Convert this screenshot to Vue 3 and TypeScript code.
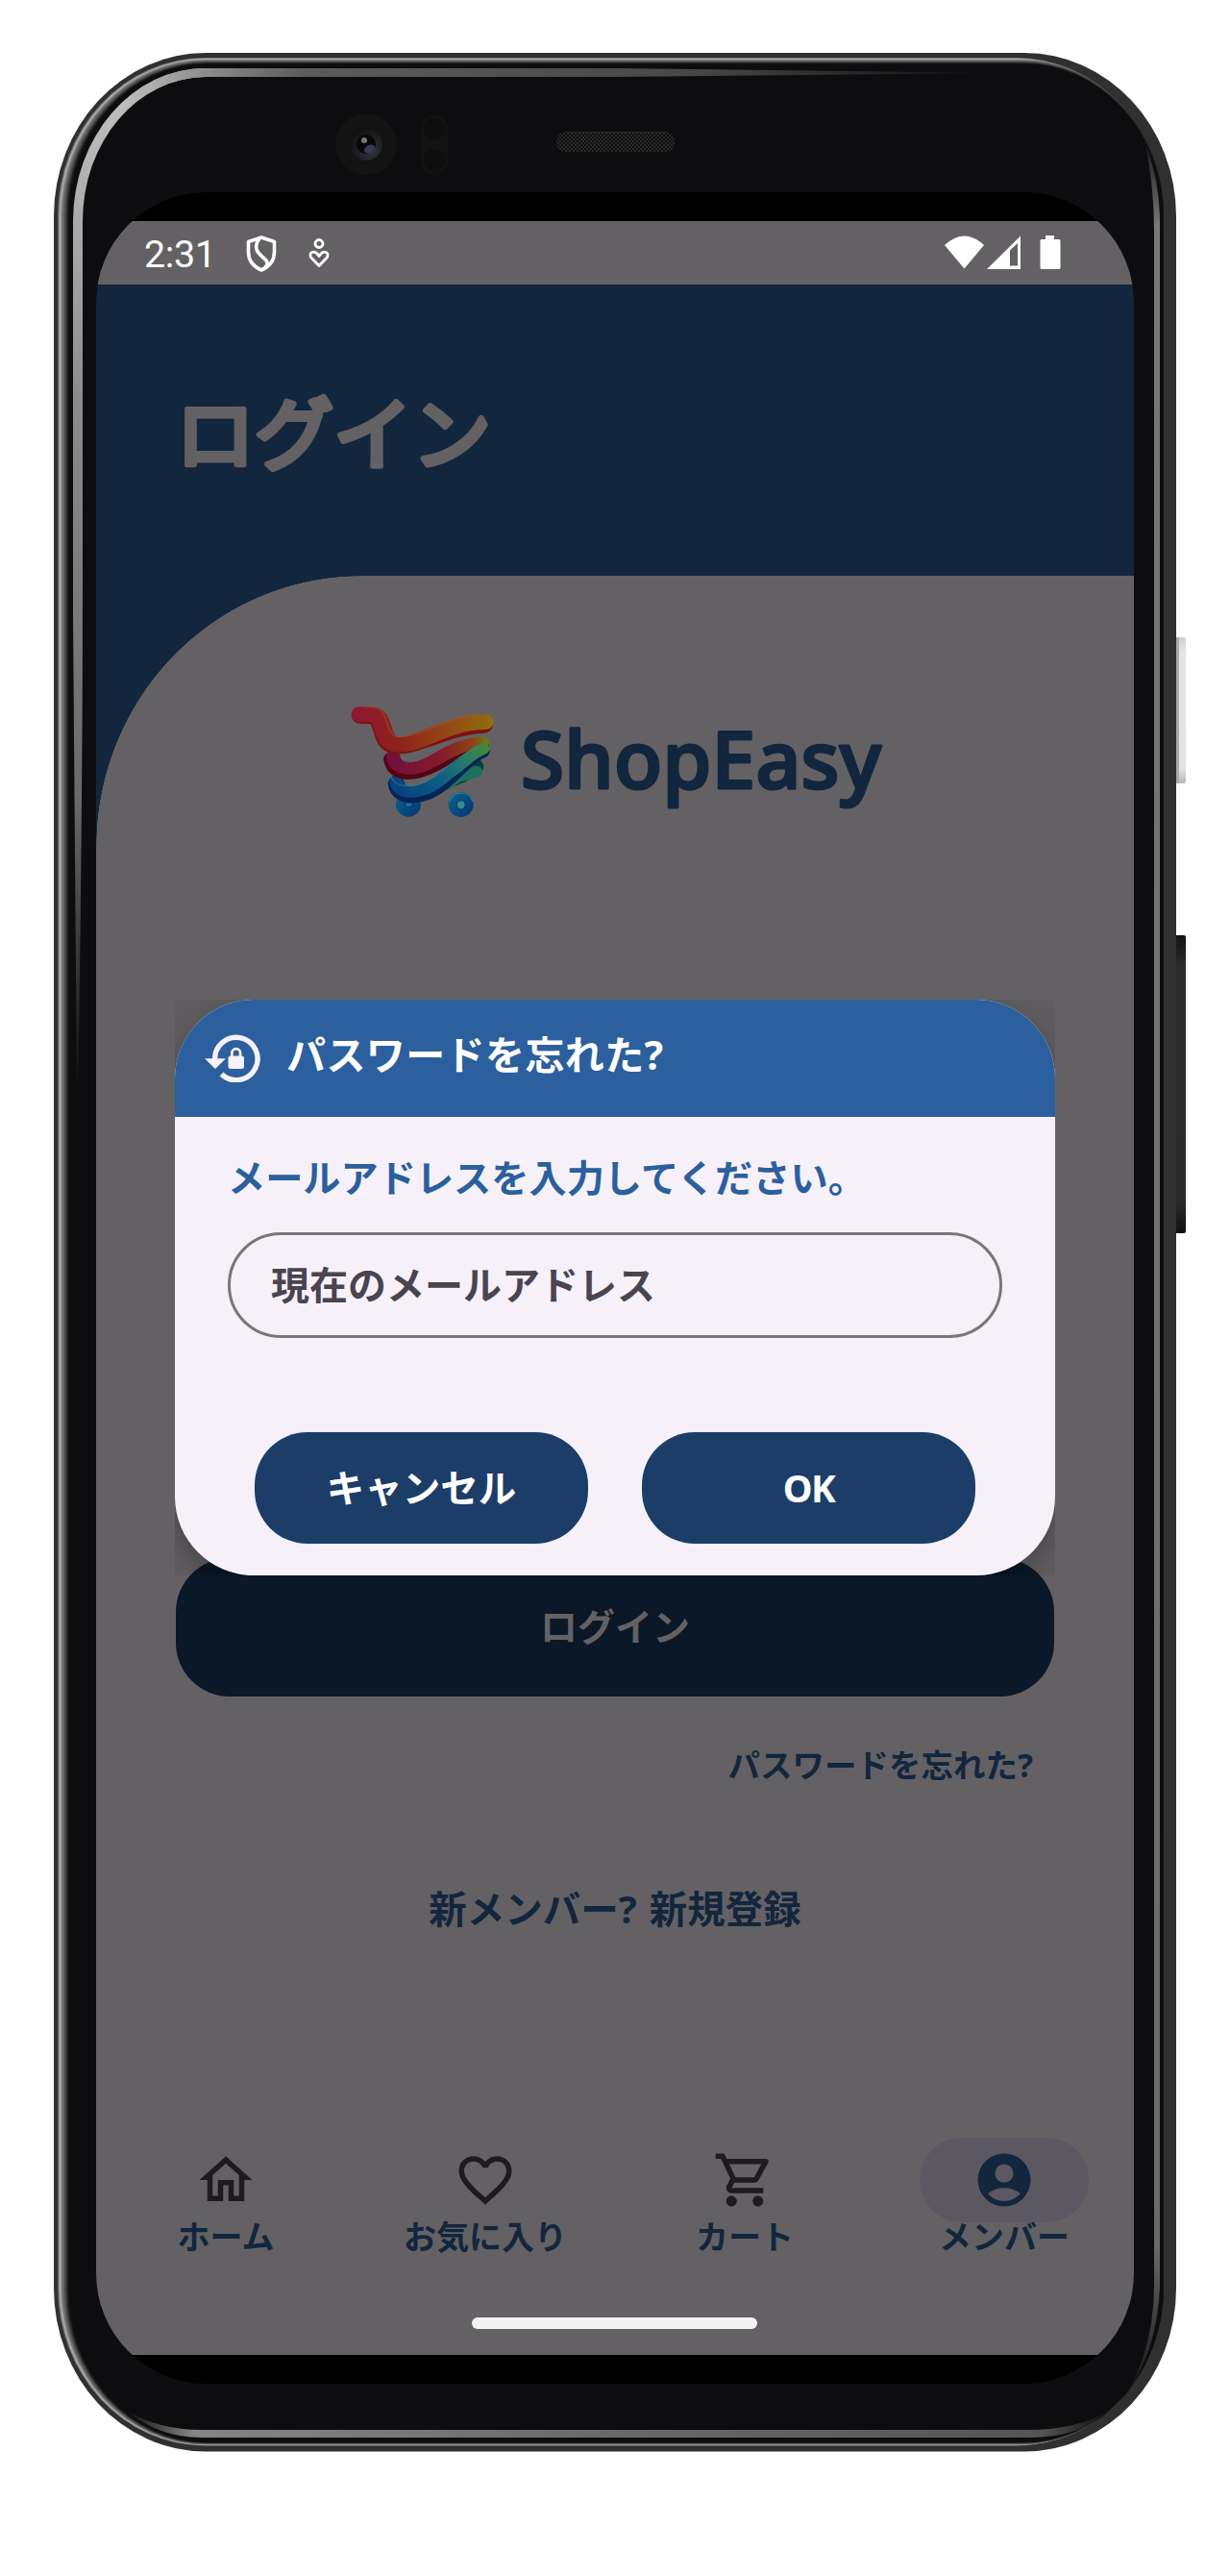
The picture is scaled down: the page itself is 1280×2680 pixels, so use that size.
<script setup lang="ts">
interface NavItem {
  id: 'home' | 'favorites' | 'cart' | 'member'
  label: string
}

const navItems: NavItem[] = [
  { id: 'home', label: 'ホーム' },
  { id: 'favorites', label: 'お気に入り' },
  { id: 'cart', label: 'カート' },
  { id: 'member', label: 'メンバー' },
]

// Concentric layers that shade the metal rim from its bright edge inwards.
const rimTones = [100, 140, 178, 150, 122, 108, 94, 80, 64, 46, 30, 18]
const rimLayers = rimTones.map((tone, i) => {
  const x = 60 + i
  const y = 60 + i * 0.55
  return {
    id: `rim${i}`,
    x,
    y,
    width: 1211 - i * 0.15 - x,
    height: 2544.5 - i * 0.3 - y,
    rx: 153 - i * 0.8,
    ry: 164 - i * 0.6,
    color: `rgb(${tone},${tone},${tone})`,
  }
})
</script>

<template>
  <div class="page">
    <svg class="device" width="1280" height="2680" viewBox="0 0 1280 2680" aria-hidden="true">
      <defs>
        <linearGradient v-for="l in rimLayers" :id="l.id" :key="l.id" gradientUnits="userSpaceOnUse" x1="56" y1="0" x2="1211" y2="0">
          <stop offset="0" :stop-color="l.color" />
          <stop offset="0.87" :stop-color="l.color" />
          <stop offset="1" stop-color="#111113" />
        </linearGradient>
        <linearGradient id="power" x1="0" y1="0" x2="0" y2="1">
          <stop offset="0" stop-color="#d0d0d0" /><stop offset="0.1" stop-color="#e4e4e4" />
          <stop offset="0.9" stop-color="#e2e2e2" /><stop offset="1" stop-color="#b8b8b8" />
        </linearGradient>
        <linearGradient id="volume" x1="0" y1="0" x2="0" y2="1">
          <stop offset="0" stop-color="#111" /><stop offset="0.1" stop-color="#2b2b2b" />
          <stop offset="0.9" stop-color="#292929" /><stop offset="1" stop-color="#111" />
        </linearGradient>
        <linearGradient id="sideGlow" gradientUnits="userSpaceOnUse" x1="0" y1="100" x2="0" y2="1140">
          <stop offset="0" stop-color="#c0c0c0" /><stop offset="0.3" stop-color="#8c8c8c" />
          <stop offset="0.7" stop-color="#6a6a6a" /><stop offset="1" stop-color="#0d0d0f" />
        </linearGradient>
        <linearGradient id="topGlow" gradientUnits="userSpaceOnUse" x1="110" y1="0" x2="1040" y2="0">
          <stop offset="0" stop-color="#bcbcbc" stop-opacity="0" /><stop offset="0.06" stop-color="#a8a8a8" /><stop offset="0.12" stop-color="#888" />
          <stop offset="0.22" stop-color="#5c5c5c" /><stop offset="0.65" stop-color="#484848" /><stop offset="1" stop-color="#0d0d0f" />
        </linearGradient>
        <linearGradient id="bottomGlow" gradientUnits="userSpaceOnUse" x1="130" y1="0" x2="1155" y2="0">
          <stop offset="0" stop-color="#0d0d0f" /><stop offset="0.07" stop-color="#858585" />
          <stop offset="0.5" stop-color="#696969" /><stop offset="0.93" stop-color="#555" /><stop offset="1" stop-color="#0d0d0f" />
        </linearGradient>
        <linearGradient id="rightGlow" gradientUnits="userSpaceOnUse" x1="0" y1="140" x2="0" y2="2500">
          <stop offset="0" stop-color="#0d0d0f" /><stop offset="0.04" stop-color="#787878" />
          <stop offset="0.93" stop-color="#6a6a6a" /><stop offset="1" stop-color="#0d0d0f" />
        </linearGradient>
        <radialGradient id="lens" cx="0.65" cy="0.7" r="0.8">
          <stop offset="0" stop-color="#34343a" /><stop offset="1" stop-color="#0c0c0d" />
        </radialGradient>
        <pattern id="mesh" width="4" height="4" patternUnits="userSpaceOnUse">
          <rect width="4" height="4" fill="#0e0e0f" />
          <rect width="2" height="2" fill="#2a2a2b" /><rect x="2" y="2" width="2" height="2" fill="#2a2a2b" />
        </pattern>
      </defs>
      <rect x="1220" y="663" width="14" height="152" rx="2" fill="url(#power)" />
      <rect x="1224" y="663" width="3" height="152" fill="#aaa" />
      <rect x="1220" y="973" width="14" height="310" rx="2" fill="url(#volume)" />
      <rect x="56" y="55" width="1168" height="2495.5" rx="158" ry="170" fill="#303030" />
      <rect v-for="l in rimLayers" :key="l.id" :x="l.x" :y="l.y" :width="l.width" :height="l.height" :rx="l.rx" :ry="l.ry" :fill="`url(#${l.id})`" />
      <rect x="72" y="67" width="1138" height="2473" rx="143" ry="157" fill="#0d0d0f" />
      <path d="M80 1140 L76 640 V230 A138 159 0 0 1 214 71 V80 A128 150 0 0 0 86 230 V600 Q86 850 81 1140Z" fill="url(#sideGlow)" />
      <path d="M76 230 A138 159 0 0 1 214 71 H640 L1040 76 L640 80 H214 A128 150 0 0 0 86 230Z" fill="url(#topGlow)" />
      <path d="M1192 150 Q1208 190 1207 240 V2380 Q1204 2450 1166 2500 Q1200 2450 1201 2380 V240 Q1201 195 1192 150Z" fill="url(#rightGlow)" />
      <path d="M132 2508 Q165 2528 210 2528 H1070 Q1120 2528 1155 2508 Q1125 2536 1070 2536 H210 Q165 2536 132 2508Z" fill="url(#bottomGlow)" />

      <circle cx="381" cy="150" r="32" fill="#131313" />
      <circle cx="381" cy="150" r="17" fill="url(#lens)" />
      <circle cx="381" cy="150" r="10" fill="#08080a" />
      <ellipse cx="384.500" cy="155" rx="6" ry="4" fill="#343a58" transform="rotate(-30 384.5 155)" />
      <circle cx="379" cy="146" r="3" fill="#777" />
      <rect x="438" y="120" width="28" height="62" rx="14" fill="#121213" />
      <circle cx="452" cy="134" r="11" fill="#0e0e0f" /><circle cx="452" cy="166" r="11" fill="#0e0e0f" />
      <rect x="579" y="137" width="123" height="21" rx="9" fill="url(#mesh)" />
      <path d="M588 137.500H693" stroke="#292929" />
    </svg>

    <main class="screen">
      <div class="status">
        <span class="clock">2:31</span>
        <svg class="shield" width="32" height="38" viewBox="0 0 32 38" fill="none" stroke="#fff" stroke-width="3.600" stroke-linejoin="round">
          <path d="M16 2 L2.500 6.500 V17 C2.500 26 8 32.500 16 36 C24 32.500 29.500 26 29.500 17 V6.500Z" />
          <path d="M14 3 C7 13 12 18 18 23 C23 27 23 29 20 34" />
        </svg>
        <svg class="care" width="22" height="31" viewBox="0 0 22 31" fill="none" stroke="#fff" stroke-width="2.800" stroke-linejoin="round">
          <circle cx="11" cy="5.500" r="4" />
          <path d="M11 28.500 L3 20.300 C-.8 15.500 6 10.500 11 18.500 C16 10.500 22.800 15.500 19 20.300Z" />
        </svg>
        <svg class="signals" width="122" height="36" viewBox="0 0 122 36" fill="#fff">
          <path d="M0 10 Q20.500 -9 41 10 L20.500 34.500Z" />
          <path fill-rule="evenodd" d="M44 35 L79 0.500 V35Z M68 15.500 V31.500 H76 V8Z" />
          <path d="M105 0 H114 V4 H119 Q120.500 4 120.500 5.500 V33.500 Q120.500 35 119 35 H101 Q99.500 35 99.500 33.500 V5.500 Q99.500 4 101 4 H105Z" />
        </svg>
      </div>

      <header class="hero">
        <svg class="hero-title" width="360" height="110" role="img">
          <text x="-4" y="92">ログイン</text>
        </svg>
      </header>

      <section class="panel">
        <div class="brand">
          <svg width="153" height="117" viewBox="60 72 400 351" preserveAspectRatio="none" fill="none" stroke-linecap="round">
            <defs>
              <linearGradient id="warm" gradientUnits="userSpaceOnUse" x1="70" y1="0" x2="450" y2="0">
                <stop offset="0" stop-color="#8f1735" /><stop offset="0.35" stop-color="#8f231b" />
                <stop offset="0.65" stop-color="#964414" /><stop offset="1" stop-color="#8e6d0e" />
              </linearGradient>
              <linearGradient id="berry" gradientUnits="userSpaceOnUse" x1="160" y1="0" x2="440" y2="0">
                <stop offset="0" stop-color="#70103f" /><stop offset="0.5" stop-color="#82192c" />
                <stop offset="0.85" stop-color="#914016" /><stop offset="1" stop-color="#63811b" />
              </linearGradient>
              <linearGradient id="cool" gradientUnits="userSpaceOnUse" x1="170" y1="350" x2="440" y2="190">
                <stop offset="0" stop-color="#063d7d" /><stop offset="0.45" stop-color="#0d5c86" />
                <stop offset="0.75" stop-color="#287d67" /><stop offset="1" stop-color="#4b8930" />
              </linearGradient>
              <linearGradient id="wheel" x1="0" y1="0" x2="1" y2="1">
                <stop offset="0" stop-color="#0f638d" /><stop offset="1" stop-color="#053372" />
              </linearGradient>
            </defs>
            <ellipse cx="222" cy="381" rx="34" ry="38" fill="url(#wheel)" />
            <path d="M213 372 V383 Q223 397 233 383 V372Z" fill="#196b98" stroke="#073b6b" stroke-width="3" />
            <path d="M340 303 C372 292 376 282 405 262" stroke="#07403d" stroke-width="44" />
            <path d="M326 318 C365 282 370 292 406 278" stroke="#1c705c" stroke-width="36" />
            <path d="M189 315 C195 375 270 358 315 314 S390 227 421 214" stroke="#042456" stroke-width="45" />
            <path d="M188 307 C195 362 266 346 312 302 S388 217 422 204" stroke="url(#cool)" stroke-width="36" />
            <path d="M177 239 C185 300 247 282 290 257 S365 205 419 194" stroke="#520514" stroke-width="45" />
            <path d="M180 230 C187 280 240 276 286 247 S365 192 423 188" stroke="url(#berry)" stroke-width="38" />
            <path d="M340 278 C370 254 392 222 426 207" stroke="url(#cool)" stroke-width="34" />
            <path d="M92 105 H116 C164 107 137 193 188 199 C245 204 333 138 427 134" stroke="#7b1210" stroke-width="48" />
            <path d="M90 100 H122 C163 102 143 187 190 193 C250 200 329 123 430 123" stroke="url(#warm)" stroke-width="48" />
            <path d="M105 78 H132 C170 89 157 164 195 170 C260 173 320 110 408 100" stroke="#a55b28" stroke-width="3" opacity=".6" />
            <path d="M174 293 C188 340 260 325 303 286 S375 214 430 196" stroke="#2d8b85" stroke-width="3" opacity=".7" />
            <ellipse cx="365" cy="381" rx="34" ry="39" fill="url(#wheel)" />
            <path d="M335 371 C347 334 388 339 397 370" stroke="#218d98" stroke-width="3" />
            <ellipse cx="365" cy="382" rx="12" ry="14" fill="#328c91" stroke="#063a69" stroke-width="3" />
          </svg>
          <svg class="wordmark" width="390" height="117" role="img">
            <text x="-2" y="86" textLength="375">ShopEasy</text>
          </svg>
        </div>
        <button class="login">ログイン</button>
        <a class="forgot">パスワードを忘れた?</a>
        <p class="signup">新メンバー? 新規登録</p>
        <nav class="nav">
          <a v-for="item in navItems" :key="item.id" class="nav-item">
            <span class="nav-icon" :class="{ active: item.id === 'member' }">
              <svg width="66" height="66" viewBox="0 0 24 24" fill="currentColor">
                <path v-if="item.id === 'home'" d="M12 5.690l5 4.500V18h-2v-6H9v6H7v-7.810l5-4.500M12 3L2 12h3v8h6v-6h2v6h6v-8h3L12 3z" />
                <path v-else-if="item.id === 'favorites'" d="M16.500 3c-1.740 0-3.410.810-4.500 2.090C10.910 3.810 9.240 3 7.500 3 4.420 3 2 5.420 2 8.500c0 3.780 3.400 6.860 8.550 11.540L12 21.350l1.450-1.320C18.600 15.360 22 12.280 22 8.500 22 5.420 19.580 3 16.500 3zm-4.400 15.550l-.1.100-.1-.1C7.140 14.240 4 11.390 4 8.500 4 6.500 5.500 5 7.500 5c1.540 0 3.040.990 3.570 2.360h1.870C13.460 5.990 14.960 5 16.500 5c2 0 3.500 1.500 3.500 3.500 0 2.890-3.140 5.740-7.900 10.050z" />
                <path v-else-if="item.id === 'cart'" d="M15.550 13c.75 0 1.410-.41 1.750-1.030l3.580-6.490c.37-.66-.11-1.480-.87-1.480H5.210l-.94-2H1v2h2l3.600 7.590-1.350 2.440C4.520 15.370 5.480 17 7 17h12v-2H7l1.100-2h7.450zM6.160 6h12.150l-2.760 5H8.530L6.160 6zM7 18c-1.100 0-1.990.9-1.990 2S5.900 22 7 22s2-.9 2-2-.9-2-2-2zm10 0c-1.100 0-1.990.9-1.990 2s.89 2 1.990 2 2-.9 2-2-.9-2-2-2z" />
                <path v-else fill-rule="evenodd" d="M12 2a10 10 0 1 0 0 20a10 10 0 1 0 0-20zM12 6a3.500 3.500 0 1 1 0 7a3.500 3.500 0 1 1 0-7zM12 20c-2.030 0-4.430-.82-6.140-2.880a9.950 9.950 0 0 1 12.280 0C16.430 19.180 14.030 20 12 20z" />
              </svg>
            </span>
            <span class="nav-label">{{ item.label }}</span>
          </a>
        </nav>
        <div class="home-bar"></div>
      </section>

      <div class="dialog-area">
        <div class="dialog">
          <div class="dialog-head">
            <svg width="58" height="50" viewBox="0 0 58 50" fill="#f6f1f9">
              <path d="M10.800 28 A22.200 22.200 0 1 1 17.500 41.500" fill="none" stroke="#f6f1f9" stroke-width="5.400" />
              <path d="M0 25.300 H22 L11 36Z" />
              <path fill-rule="evenodd" d="M27 22.500 V19.500 A5.700 5.700 0 0 1 38.400 19.500 V22.500 Q41 22.500 41 25 V33.500 Q41 36 38.500 36 H27 Q24.500 36 24.500 33.500 V25 Q24.500 22.500 27 22.500Z M29.700 22.500 H35.700 V19.500 A3 3 0 0 0 29.700 19.500Z" />
            </svg>
            <h2>パスワードを忘れた?</h2>
          </div>
          <div class="dialog-body">
            <p class="prompt">メールアドレスを入力してください。</p>
            <div class="field">現在のメールアドレス</div>
            <div class="actions">
              <button>キャンセル</button>
              <button class="ok">OK</button>
            </div>
          </div>
        </div>
      </div>
    </main>
  </div>
</template>

<style>
body {
  margin: 0;
  background: #fff;
}
</style>

<style scoped>
.page {
  position: relative;
  box-sizing: border-box;
  width: 1280px;
  height: 2680px;
  padding: 200px 100px;
  font-family: "Noto Sans", "Noto Sans CJK JP", sans-serif;
  font-weight: 700;
}
.device {
  position: absolute;
  inset: 0;
}
.screen {
  position: relative;
  box-sizing: border-box;
  width: 1080px;
  height: 2280px;
  padding: 30px 0;
  border-radius: 115px;
  overflow: hidden;
  background: #000;
}
.status {
  display: flex;
  align-items: flex-start;
  height: 66px;
  background: #646164;
  color: #fff;
}
.clock {
  width: 72px;
  margin-left: 50px;
  font: 400 39.5px/66px Roboto, sans-serif;
  letter-spacing: -0.4px;
  padding-top: 2px;
}
.shield {
  margin: 15px 0 0 34px;
}
.care {
  margin: 18px 0 0 33px;
}
.signals {
  margin: 15px 0 0 640px;
}
.hero {
  box-sizing: border-box;
  height: 303px;
  padding: 94px 0 0 87px;
  background: #12263d;
}
.hero-title,
.wordmark {
  display: block;
  overflow: visible;
}
.hero-title text {
  font: 400 82px "Noto Sans CJK JP", sans-serif;
  fill: #646164;
  stroke: #646164;
  stroke-width: 6px;
  stroke-linejoin: round;
}
.wordmark text {
  font: 500 82px "Noto Sans", sans-serif;
  fill: #12263d;
  stroke: #12263d;
  stroke-width: 3px;
  stroke-linejoin: round;
}
.panel {
  display: flex;
  flex-direction: column;
  height: 1851px;
  background: radial-gradient(276px 282px at 276px 282px, #646164 99.8%, #12263d 100%) 0 0 / 276px 282px no-repeat,
    linear-gradient(#646164, #646164) 276px 0 / 804px 282px no-repeat,
    linear-gradient(#646164, #646164) 0 282px / 1080px 1569px no-repeat;
  color: #12263d;
}
.brand {
  display: flex;
  gap: 28px;
  margin: 135px 0 0 263px;
}
button {
  display: block;
  padding: 0;
  border: 0;
  font: inherit;
  color: #fff;
}
.login {
  width: 914px;
  height: 144px;
  margin: 770px 0 0 83px;
  border-radius: 56px;
  background: #0a1828;
  color: #646164;
  font-size: 39px;
  line-height: 138px;
  padding-bottom: 2px;
}
.forgot {
  align-self: flex-end;
  margin: 43px 105px 0 0;
  font-size: 33.500px;
  line-height: 56px;
}
.signup {
  margin: 89px 0 0;
  font-size: 39.500px;
  line-height: 66px;
  text-align: center;
  word-spacing: 3px;
}
.nav {
  display: flex;
  margin-top: 205px;
}
.nav-item {
  flex: 1;
  display: flex;
  flex-direction: column;
  align-items: center;
}
.nav-icon {
  display: flex;
  align-items: center;
  justify-content: center;
  width: 176px;
  height: 88px;
  border-radius: 44px;
  color: #1d1b20;
}
.nav-icon.active {
  background: #5b5862;
  color: #12263d;
}
.nav-label {
  margin-top: -10px;
  font-size: 34px;
  line-height: 50px;
}
.home-bar {
  width: 297px;
  height: 12px;
  margin: 59px 0 0 391px;
  border-radius: 6px;
  background: #f2f2f2;
}
.dialog-area {
  position: absolute;
  top: 840px;
  left: 82px;
  width: 916px;
  height: 599px;
  overflow: hidden;
  background: rgba(0, 0, 0, 0.03);
}
.dialog {
  height: 100%;
  border-radius: 82px;
  overflow: hidden;
  background: #f6f1f9;
  box-shadow: 0 12px 30px rgba(0, 0, 0, 0.26);
}
.dialog-head {
  display: flex;
  align-items: center;
  height: 122px;
  box-sizing: border-box;
  padding-left: 31px;
  background: #2c5f9d;
  color: #fff;
}
.dialog-head h2 {
  margin: -8px 0 0 27px;
  font-size: 41px;
  line-height: 60px;
  letter-spacing: 0.4px;
}
.dialog-body {
  padding: 32px 55px 0;
}
.prompt {
  margin: 0;
  color: #2c5f9d;
  font-size: 39.200px;
  line-height: 62px;
}
.field {
  box-sizing: border-box;
  height: 110px;
  margin-top: 26px;
  padding-left: 42px;
  border: 3px solid #79747e;
  border-radius: 55px;
  color: #49454f;
  font-size: 40px;
  line-height: 103px;
}
.actions {
  display: flex;
  gap: 56px;
  margin: 98px 0 0 28px;
}
.actions button {
  width: 347px;
  height: 116px;
  padding-bottom: 4px;
  border-radius: 55px;
  background: #1c3d68;
  font-size: 39.500px;
}
.actions .ok {
  padding-bottom: 2px;
  font-size: 39px;
  letter-spacing: -1.5px;
}
</style>
